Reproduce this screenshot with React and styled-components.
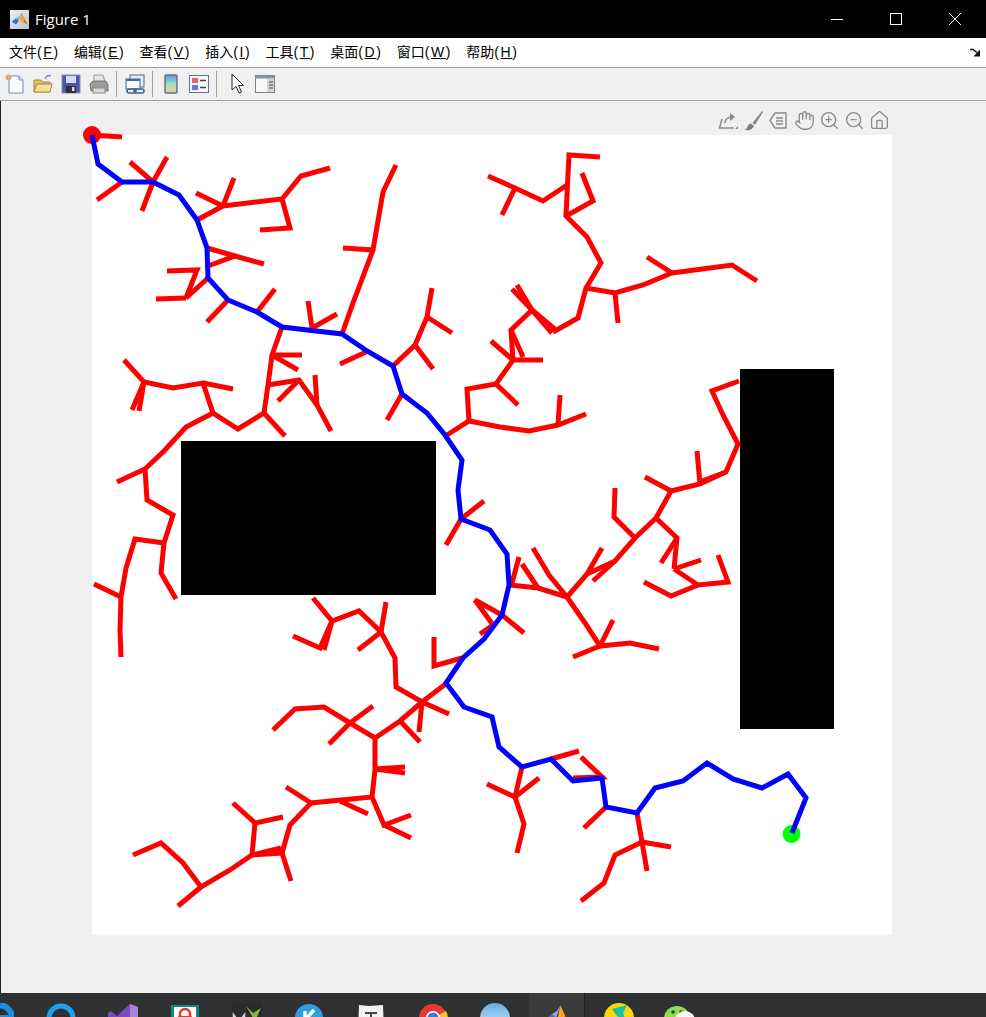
import styled, { createGlobalStyle } from "styled-components";
import { Hand, House, ZoomIn, ZoomOut } from "lucide-react";

const MENUS = [
  ["文件", "F"],
  ["编辑", "E"],
  ["查看", "V"],
  ["插入", "I"],
  ["工具", "T"],
  ["桌面", "D"],
  ["窗口", "W"],
  ["帮助", "H"],
];

// tree branches, page coordinates (the chart's viewBox starts at 92,135)
const RED = [
  "92,135 122,137",
  "122,182 97,200",
  "153,182 130,162",
  "153,182 167,157",
  "153,182 142,211",
  "197,220 223,206 282,199 301,176 330,168",
  "223,206 196,193",
  "223,206 234,178",
  "282,199 290,228 260,230",
  "207,248 235,256 264,264",
  "235,256 208,266",
  "208,278 186,298 197,270 167,271",
  "186,298 156,299",
  "228,300 207,322",
  "257,312 275,289",
  "282,327 272,355 268,385 264,413 238,429 213,413 203,383 173,388 144,382 124,360",
  "272,355 302,355",
  "272,355 298,370",
  "268,385 299,380 317,405 331,431",
  "299,380 278,401",
  "317,405 315,375",
  "264,413 285,436",
  "203,383 233,389",
  "144,382 132,410",
  "144,382 139,411",
  "213,413 186,427 164,451 145,469 117,482",
  "145,469 147,500 173,515 164,543 161,573 176,599",
  "164,543 135,539 126,568 121,597 120,630 121,657",
  "121,597 94,584",
  "312,328 308,301",
  "312,328 337,314",
  "342,334 353,303 373,250 383,192 396,165",
  "373,250 343,248",
  "366,352 340,364",
  "393,366 415,345 427,317 432,288",
  "427,317 452,333",
  "415,345 433,369",
  "402,394 387,420",
  "447,435 469,421 500,427 529,431 558,425 586,414",
  "558,425 560,395",
  "469,421 467,389 496,384 513,360 543,360",
  "496,384 518,405",
  "513,360 491,341",
  "513,360 511,330 532,310",
  "511,330 523,357",
  "532,310 512,289",
  "532,310 517,285",
  "532,310 552,333",
  "532,310 557,331",
  "553,332 578,318 586,288 601,263 587,237 566,216 569,155 600,157",
  "566,216 593,201 582,173",
  "567,185 543,201 515,188 488,176",
  "515,188 502,215",
  "586,288 615,293 643,285 672,273 732,265 757,281",
  "615,293 618,323",
  "672,273 647,257",
  "510,585 538,588 567,597",
  "512,583 519,557",
  "538,588 522,564",
  "567,597 549,575 533,548",
  "567,597 587,574 615,561 635,538 656,518 671,491 700,484 726,472 738,444 723,415 712,391 739,381",
  "702,481 726,472",
  "587,574 602,548",
  "615,561 593,581",
  "635,538 614,517 615,488",
  "671,491 645,477",
  "700,484 697,451",
  "656,518 677,538 674,569",
  "677,538 661,563",
  "674,569 701,560",
  "674,569 698,585 728,582 718,555",
  "698,585 671,596 644,582",
  "567,597 585,623 600,646 630,643 659,649",
  "600,646 573,657",
  "600,646 613,620",
  "502,615 475,600 493,625 480,634",
  "502,615 524,633",
  "461,519 484,501",
  "461,519 446,545",
  "462,658 434,666 434,637",
  "447,683 422,702 396,687 395,658 381,632 359,611 332,621 313,598",
  "381,632 386,602",
  "381,632 358,650",
  "332,621 320,648 293,636",
  "332,621 324,650",
  "422,702 400,721 375,738 350,723 324,707 295,709 273,730",
  "422,702 449,714",
  "422,702 419,732",
  "400,721 420,742",
  "350,723 373,706",
  "350,723 329,744",
  "375,738 375,770 372,797 311,803 290,825 282,853 252,855 230,870 201,887 183,863 161,843 133,855",
  "375,769 405,767",
  "375,769 405,773",
  "372,797 384,825 411,815",
  "384,825 411,838",
  "340,801 368,814",
  "311,803 286,787",
  "282,853 291,881",
  "252,855 281,848",
  "252,855 255,823 283,817",
  "255,823 233,803",
  "201,887 178,906",
  "522,767 515,797 487,784",
  "515,797 539,778",
  "515,797 524,824 517,853",
  "551,759 579,751",
  "573,778 602,777 581,757",
  "606,807 584,828",
  "637,813 642,842 671,847",
  "642,842 647,871",
  "642,842 615,855 604,883 581,901",
];

const BLUE =
  "92,135 98,164 122,182 153,182 179,195 197,220 207,248 208,278 228,300 257,312 282,327 342,334 367,351 393,366 402,394 427,413 445,435 462,460 458,490 461,519 490,530 507,554 509,585 502,615 484,639 463,658 446,683 464,707 492,717 499,747 522,767 551,759 573,781 602,778 606,807 637,813 655,788 683,781 707,763 733,779 762,788 788,774 806,798 792,833";

const MatlabLogo = ({ size = 30 }) => (
  <svg width={size} height={size} viewBox="0 0 30 30">
    <polygon points="1,19 9,13 14,17 9,24" fill="#3f6fb5" />
    <polygon points="9,13 15,9 19,3 14,17" fill="#7fb0d8" />
    <polygon points="19,3 23,12 29,24 22,20 17,14" fill="#e5672a" />
    <polygon points="19,3 24,14 21,24 16,16" fill="#f6a623" />
  </svg>
);

export default function App() {
  return (
    <Page>
      <GlobalStyle />
      <TitleBar>
        <TitleIcon>
          <MatlabLogo size={17} />
        </TitleIcon>
        <TitleText>Figure 1</TitleText>
        <WindowButtons>
          <WindowButton>
            <svg width="14" height="14" viewBox="0 0 14 14">
              <path d="M1 7.5h12" stroke="#fff" fill="none" />
            </svg>
          </WindowButton>
          <WindowButton>
            <svg width="14" height="14" viewBox="0 0 14 14">
              <rect x="1.5" y="1.5" width="11" height="11" stroke="#fff" fill="none" />
            </svg>
          </WindowButton>
          <WindowButton>
            <svg width="14" height="14" viewBox="0 0 14 14">
              <path d="M1 1l12 12M13 1L1 13" stroke="#fff" fill="none" />
            </svg>
          </WindowButton>
        </WindowButtons>
      </TitleBar>

      <MenuBar>
        {MENUS.map(([label, key]) => (
          <MenuItem key={key}>
            {label}
            <MenuKey>
              (<u>{key}</u>)
            </MenuKey>
          </MenuItem>
        ))}
        <DockArrow>
          <svg width="11" height="9" viewBox="0 0 11 9">
            <path d="M0 1.5h3l4 3" stroke="#111" strokeWidth="1.4" fill="none" />
            <polygon points="10,1.5 10,8.5 3.5,8.5" fill="#111" />
          </svg>
        </DockArrow>
      </MenuBar>

      <ToolBar>
        <ToolButton>
          <svg width="22" height="22" viewBox="0 0 22 22">
            <path d="M5 3h10l4 4v13H5z" fill="#fdfdfd" stroke="#6d8db5" />
            <path d="M15 3v4h4" fill="#d6e4f2" stroke="#6d8db5" />
            <circle cx="4.5" cy="4.5" r="3" fill="#f0a070" />
          </svg>
        </ToolButton>
        <ToolButton>
          <svg width="22" height="22" viewBox="0 0 22 22">
            <path d="M2 7h7l2 2h7v10H2z" fill="#e0bc5c" stroke="#a08a45" />
            <path d="M2 19l3-8h15l-2 8z" fill="#f6df96" stroke="#a08a45" />
            <path d="M13 6c1-3 3-4 6-3" stroke="#7f9cbc" strokeWidth="1.5" fill="none" />
          </svg>
        </ToolButton>
        <ToolButton>
          <svg width="22" height="22" viewBox="0 0 22 22">
            <rect x="2" y="2" width="18" height="18" fill="#4b55a8" stroke="#8c93c9" />
            <rect x="6" y="3" width="10" height="7" fill="#d7d9ee" />
            <rect x="6" y="13" width="10" height="7" fill="#2d2d3c" />
            <rect x="12" y="14" width="2.5" height="4" fill="#d7d9ee" />
          </svg>
        </ToolButton>
        <ToolButton>
          <svg width="22" height="22" viewBox="0 0 22 22">
            <path d="M6 2h9l2 7H6z" fill="#e3e6e8" stroke="#9a9a9a" />
            <path d="M2 11l3-3h13l2 4v6H3z" fill="#9c9c9c" stroke="#777" />
            <rect x="5" y="15" width="12" height="5" fill="#d9d9d9" stroke="#8a8a8a" />
          </svg>
        </ToolButton>
        <ToolSeparator />
        <ToolButton>
          <svg width="22" height="22" viewBox="0 0 22 22">
            <rect x="6" y="2" width="14" height="12" fill="#e9f0f7" stroke="#3f6a96" />
            <rect x="2" y="6" width="14" height="10" fill="#f6f8fb" stroke="#3f6a96" />
            <path d="M2 7h14" stroke="#3f6a96" strokeWidth="2" />
            <rect x="3" y="16" width="9" height="4" rx="2" fill="none" stroke="#3d6690" strokeWidth="1.6" />
            <rect x="10" y="16" width="10" height="4" rx="2" fill="none" stroke="#3d6690" strokeWidth="1.6" />
          </svg>
        </ToolButton>
        <ToolSeparator />
        <ToolButton>
          <svg width="22" height="22" viewBox="0 0 22 22">
            <defs>
              <linearGradient id="bar" x1="0" y1="0" x2="0" y2="1">
                <stop offset="0" stopColor="#6f8fe0" />
                <stop offset="0.5" stopColor="#9fe0c0" />
                <stop offset="1" stopColor="#f3d07c" />
              </linearGradient>
            </defs>
            <rect x="5" y="2" width="12" height="18" rx="1" fill="url(#bar)" stroke="#5a6f8d" strokeWidth="1.4" />
          </svg>
        </ToolButton>
        <ToolButton>
          <svg width="22" height="22" viewBox="0 0 22 22">
            <rect x="1.5" y="2.5" width="19" height="17" fill="#f3f5fa" stroke="#5f7394" />
            <rect x="4" y="5" width="6" height="5" fill="#e0666a" />
            <rect x="4" y="12" width="6" height="5" fill="#6f73d8" />
            <path d="M12 7.5h6M12 14.5h6" stroke="#444" strokeWidth="1.5" />
          </svg>
        </ToolButton>
        <ToolSeparator />
        <ToolButton $shift={2}>
          <svg width="22" height="22" viewBox="0 0 22 22">
            <path d="M6 1v16l4-3.5 3 6.5 2.5-1-3-6.5h5z" fill="#fff" stroke="#222" />
          </svg>
        </ToolButton>
        <ToolButton>
          <svg width="22" height="22" viewBox="0 0 22 22">
            <rect x="1.5" y="2.5" width="19" height="17" fill="#f7f7f7" stroke="#74808c" />
            <rect x="1.5" y="2.5" width="19" height="3" fill="#7d97ad" />
            <rect x="13" y="6" width="7" height="13" fill="#d5d5d5" />
            <path d="M15 9h4M15 12h4M15 15h4" stroke="#444" />
          </svg>
        </ToolButton>
      </ToolBar>

      <FigureArea>
        <AxesToolbar>
          <AxesIcon>
            <svg width="21" height="21" viewBox="0 0 21 21" fill="none" stroke="#8a8a8a" strokeWidth="1.5">
              <path d="M4 9l-2.5 9h14" />
              <path d="M7 13c0-4 3-6 8-6" />
              <path d="M12 3l5 4-5 4z" fill="#8a8a8a" stroke="none" />
              <path d="M20 16v3h-3z" fill="#8a8a8a" stroke="none" />
            </svg>
          </AxesIcon>
          <AxesIcon>
            <svg width="21" height="21" viewBox="0 0 21 21">
              <path d="M19 1L9.5 13l2.5 2L20 2z" fill="#8a8a8a" />
              <path d="M8 13.5c-3 .5-3 3-4 4.500-.5 1-2 1.500-3 1.500 3 1.500 8 1 10-3.500z" fill="#7a7a7a" />
            </svg>
          </AxesIcon>
          <AxesIcon>
            <svg width="21" height="21" viewBox="0 0 21 21" fill="none" stroke="#8a8a8a" strokeWidth="1.4">
              <path d="M7 3h11v15H7l-5-7.500z" />
              <path d="M8 8h7M8 11h7M8 14h7" />
            </svg>
          </AxesIcon>
          <AxesIcon>
            <Hand size={21} color="#8a8a8a" strokeWidth={1.5} />
          </AxesIcon>
          <AxesIcon>
            <ZoomIn size={21} color="#8a8a8a" strokeWidth={1.5} />
          </AxesIcon>
          <AxesIcon>
            <ZoomOut size={21} color="#8a8a8a" strokeWidth={1.5} />
          </AxesIcon>
          <AxesIcon>
            <House size={21} color="#8a8a8a" strokeWidth={1.5} />
          </AxesIcon>
        </AxesToolbar>

        <Chart viewBox="92 135 800 800">
          <rect x="92" y="135" width="800" height="800" fill="#fff" />
          <rect x="181" y="441" width="255" height="154" fill="#000" />
          <rect x="740" y="369" width="94" height="360" fill="#000" />
          <circle cx="92" cy="135" r="9" fill="#f00" />
          <circle cx="791.500" cy="834" r="9" fill="#0f0" />
          {RED.map((points) => (
            <Trace key={points} points={points} $color="#f00" />
          ))}
          <Trace points={BLUE} $color="#00f" />
        </Chart>
      </FigureArea>

      <TaskBar>
        <TaskSlot>
          <svg width="30" height="30" viewBox="0 0 30 30">
            <path d="M2 15a13 13 0 0 1 26 0H9" fill="none" stroke="#1a8fe3" strokeWidth="6" />
          </svg>
        </TaskSlot>
        <TaskSlot>
          <svg width="30" height="30" viewBox="0 0 30 30">
            <circle cx="15" cy="15" r="12" fill="none" stroke="#1aa0f0" strokeWidth="5" />
          </svg>
        </TaskSlot>
        <TaskSlot>
          <svg width="30" height="30" viewBox="0 0 30 30">
            <path d="M22 1l8 3v24l-8 2-13-13-6 5-3-2V10l3-2 6 5z" fill="#7a4bc0" />
            <path d="M22 1l8 3v24l-8 2z" fill="#a884d8" />
          </svg>
        </TaskSlot>
        <TaskSlot>
          <svg width="30" height="30" viewBox="0 0 30 30">
            <path d="M1 2h28v16c0 6-8 9-14 12C9 27 1 24 1 18z" fill="#0f8a80" />
            <path d="M4 4h22v14c0 5-6 7-11 10C10 25 4 23 4 18z" fill="#fff" />
            <path d="M10 14v-3a5 5 0 0 1 10 0v3" fill="none" stroke="#e23c2c" strokeWidth="2.500" />
            <rect x="8" y="13" width="14" height="11" rx="1" fill="#e23c2c" />
          </svg>
        </TaskSlot>
        <TaskSlot>
          <svg width="30" height="30" viewBox="0 0 30 30">
            <rect width="30" height="30" fill="#2b2b2b" />
            <path d="M14 3l7 7 8-5-6 13z" fill="#8cb83a" />
            <path d="M2 26V13l5 7 5-7v13" fill="none" stroke="#d8d8d8" strokeWidth="2.500" />
          </svg>
        </TaskSlot>
        <TaskSlot>
          <svg width="30" height="30" viewBox="0 0 30 30">
            <circle cx="15" cy="15" r="14" fill="#2f9ee0" />
            <path d="M11 8v16M11 17l9-10M13 15l8 9" stroke="#fff" strokeWidth="3.500" fill="none" />
          </svg>
        </TaskSlot>
        <TaskSlot>
          <svg width="30" height="30" viewBox="0 0 30 30">
            <path d="M3 2l10 1 14-1 1 27H2z" fill="#f2f2f2" />
            <path d="M9 10h12M15 10v12" stroke="#444" strokeWidth="2" />
          </svg>
        </TaskSlot>
        <TaskSlot>
          <svg width="30" height="30" viewBox="0 0 30 30">
            <circle cx="15" cy="15" r="14" fill="#e33b2e" />
            <path d="M15 15L28 8a14 14 0 0 1-10 21z" fill="#f7c52c" />
            <path d="M15 15L18 29A14 14 0 0 1 2 20z" fill="#2f9e4f" />
            <circle cx="15" cy="15" r="7" fill="#fff" />
            <circle cx="15" cy="15" r="5.500" fill="#3c7be0" />
          </svg>
        </TaskSlot>
        <TaskSlot>
          <svg width="30" height="30" viewBox="0 0 30 30">
            <defs>
              <linearGradient id="ball" x1="0" y1="0" x2="0" y2="1">
                <stop offset="0" stopColor="#5fb0e8" />
                <stop offset="1" stopColor="#e4eef2" />
              </linearGradient>
            </defs>
            <circle cx="15" cy="15" r="15" fill="url(#ball)" />
          </svg>
        </TaskSlot>
        <TaskSlot $active>
          <MatlabLogo size={26} />
        </TaskSlot>
        <TaskSlot>
          <svg width="30" height="30" viewBox="0 0 30 30">
            <circle cx="15" cy="15" r="15" fill="#fbd600" />
            <path d="M8 6l15-4-4 8 3 8-9-5z" fill="#17c2a8" />
          </svg>
        </TaskSlot>
        <TaskSlot $narrow>
          <svg width="30" height="30" viewBox="0 0 30 30">
            <ellipse cx="13" cy="15" rx="13" ry="12" fill="#8fdc50" />
            <circle cx="9" cy="9" r="1.800" fill="#2d4a1e" />
            <circle cx="17" cy="9" r="1.800" fill="#2d4a1e" />
            <ellipse cx="21" cy="17" rx="10" ry="9" fill="#fafafa" />
          </svg>
        </TaskSlot>
      </TaskBar>
    </Page>
  );
}

const GlobalStyle = createGlobalStyle`
  html,
  body {
    margin: 0;
    padding: 0;
    background: #f0f0f0;
  }
`;

const Page = styled.div`
  width: 986px;
  height: 1017px;
  display: flex;
  flex-direction: column;
  overflow: hidden;
  font-family: "Liberation Sans", "Noto Sans CJK SC", sans-serif;
`;

const TitleBar = styled.div`
  height: 38px;
  flex: none;
  display: flex;
  align-items: center;
  background: #000;
  color: #fff;
`;

const TitleIcon = styled.div`
  width: 19px;
  height: 19px;
  margin-left: 10px;
  display: flex;
  align-items: center;
  justify-content: center;
  background: linear-gradient(135deg, #eef1f4, #b9c2cc);
`;

const TitleText = styled.span`
  margin-left: 6px;
  font-family: "Open Sans", sans-serif;
  font-size: 15px;
`;

const WindowButtons = styled.div`
  margin-left: auto;
  display: flex;
  padding-right: 2px;
`;

const WindowButton = styled.div`
  width: 59px;
  height: 38px;
  display: flex;
  align-items: center;
  justify-content: center;
`;

const MenuBar = styled.div`
  height: 29px;
  flex: none;
  display: flex;
  align-items: center;
  background: #fff;
  border-bottom: 1px solid #a0a0a0;
`;

const MenuItem = styled.span`
  padding-left: 9px;
  padding-right: 5.2px;
  font-size: 14px;
  line-height: 29px;
  color: #000;
`;

const MenuKey = styled.span`
  letter-spacing: 1.6px;
`;

const DockArrow = styled.div`
  margin-left: auto;
  margin-right: 5px;
  display: flex;
`;

const ToolBar = styled.div`
  height: 32px;
  flex: none;
  display: flex;
  align-items: center;
  padding-left: 1px;
  background: #f0f0f0;
  border-bottom: 1px solid #a0a0a0;
`;

const ToolButton = styled.div`
  width: 28px;
  height: 32px;
  display: flex;
  align-items: center;
  justify-content: center;
  margin-left: ${(p) => p.$shift || 0}px;
`;

const ToolSeparator = styled.div`
  width: 1px;
  height: 26px;
  margin: 0 4px 0 3px;
  background: #a0a0a0;
`;

const FigureArea = styled.div`
  position: relative;
  flex: 1;
  min-height: 0;
  padding: 34px 0 0 91px;
  background: #f0f0f0;
  border-left: 1px solid #222;
`;

const AxesToolbar = styled.div`
  position: absolute;
  top: 9px;
  left: 717px;
  display: flex;
  gap: 4.2px;
`;

const AxesIcon = styled.div`
  width: 21px;
  height: 21px;
`;

const Chart = styled.svg`
  display: block;
  width: 800px;
  height: 800px;
  overflow: visible;
`;

const Trace = styled.polyline`
  fill: none;
  stroke: ${(p) => p.$color};
  stroke-width: 5;
  stroke-linejoin: miter;
  stroke-miterlimit: 3;
`;

const TaskBar = styled.div`
  height: 24px;
  flex: none;
  display: flex;
  margin-left: -32px;
  overflow: hidden;
  background: #2f3032;
`;

const TaskSlot = styled.div`
  width: ${(p) => (p.$active ? "56px" : p.$narrow ? "58px" : "62px")};
  height: 24px;
  flex: none;
  margin: 0 ${(p) => (p.$active ? "3px" : "0")};
  padding-top: 10px;
  box-sizing: border-box;
  display: flex;
  justify-content: center;
  background: ${(p) => (p.$active ? "#3b3b3b" : "transparent")};
  border-right: ${(p) => (p.$active ? "1px solid #222" : "none")};
  svg {
    flex: none;
  }
`;
